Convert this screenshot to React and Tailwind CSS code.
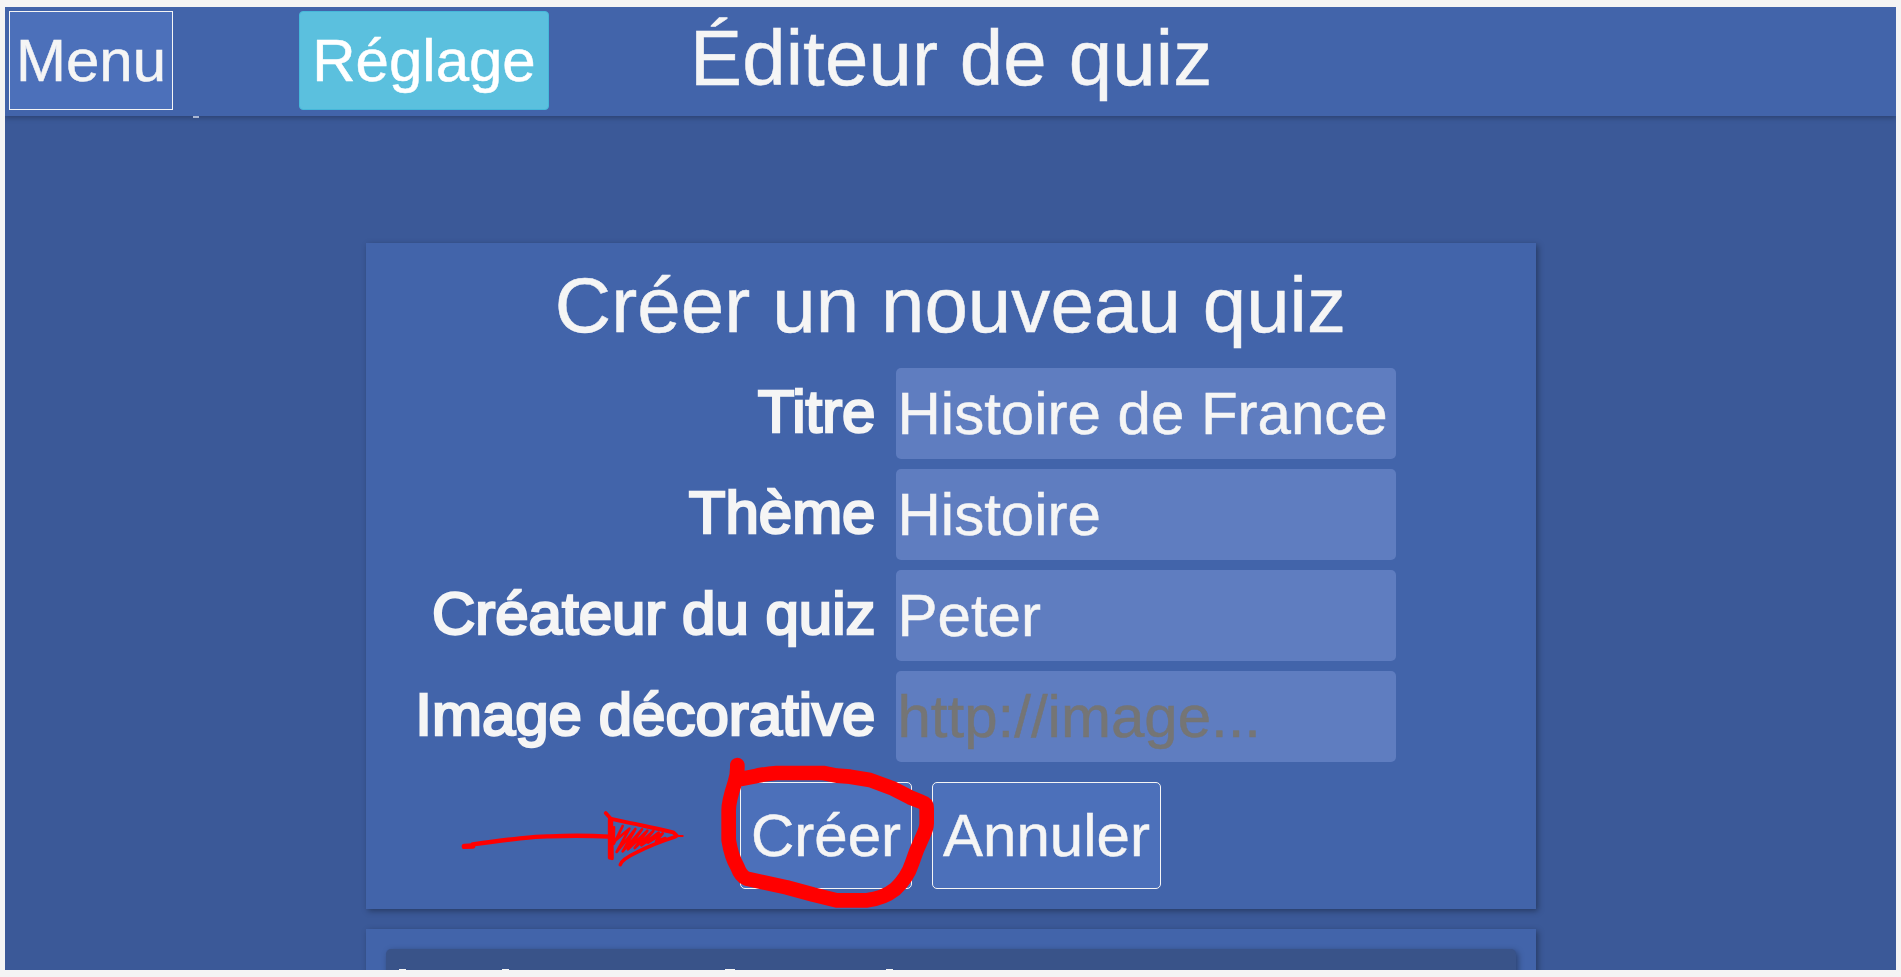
const fields = [
  { label: 'Titre', value: 'Histoire de France' },
  { label: 'Thème', value: 'Histoire' },
  { label: 'Créateur du quiz', value: 'Peter' },
  { label: 'Image décorative', value: '', placeholder: 'http://image...' },
];

function Header() {
  return (
    <header className="relative z-10 flex h-[109px] shrink-0 items-start bg-[#4264aa] pt-1 pl-1 shadow-[0_2px_5px_rgba(0,0,0,0.26)]">
      <button className="h-[99px] w-[164px] border border-[#f5f5f5] bg-[#4c70ba] text-[60px] leading-[97px]">Menu</button>
      <button className="ml-[126px] h-[99px] w-[250px] rounded-[4px] border border-[#46b8da] bg-[#5bc0de] text-[60px] leading-[97px] text-white">
        Réglage
      </button>
      <h1 className="ml-[141px] text-[78px] leading-[94px] tracking-[0.13px] whitespace-nowrap">Éditeur de quiz</h1>
      <span className="absolute top-full left-[188px] h-[2px] w-[6px] bg-[#a9b5d0]" />
    </header>
  );
}

function Field({ label, value, placeholder }) {
  return (
    <div className="flex h-[91px] items-center gap-5">
      <label className="w-[510px] pb-1 text-right text-[60px] leading-[87px] whitespace-nowrap [-webkit-text-stroke:2.5px_#f5f5f5]">
        {label}
      </label>
      <input
        className="h-[91px] w-[500px] rounded-[5px] bg-[#5f7dc0] px-[2px] text-[60px] text-[#f5f5f5] outline-none placeholder:text-[#757575]"
        defaultValue={value}
        placeholder={placeholder}
      />
    </div>
  );
}

function CreateCard() {
  return (
    <section className="flex h-[666px] w-[1170px] shrink-0 flex-col bg-[#4264aa] shadow-[2px_2px_6px_rgba(0,0,0,0.35)]">
      <h2 className="h-[125px] pt-[15px] text-center text-[78px] leading-[94px] tracking-[0.1px] whitespace-nowrap">Créer un nouveau quiz</h2>
      <form className="flex flex-col gap-[10px]">
        {fields.map((f) => (
          <Field key={f.label} {...f} />
        ))}
      </form>
      <div className="mt-5 flex justify-center gap-5">
        <button className="h-[107px] w-[172px] rounded-[5px] border border-[#f5f5f5] bg-[#4c70ba] text-[60px] leading-[105px]">Créer</button>
        <button className="h-[107px] w-[229px] rounded-[5px] border border-[#f5f5f5] bg-[#4c70ba] text-[60px] leading-[105px]">Annuler</button>
      </div>
    </section>
  );
}

function ListCard() {
  return (
    <section className="h-[200px] w-[1170px] shrink-0 bg-[#4264aa] px-5 pt-5 shadow-[2px_2px_6px_rgba(0,0,0,0.35)]">
      <div className="flex h-[180px] rounded-[5px] bg-[#395389] pt-5 pl-[13px] shadow-[2px_2px_6px_rgba(0,0,0,0.35)]">
        <span className="h-px w-[7px] bg-[#f5f5f5]" />
        <span className="ml-[96px] h-px w-[7px] bg-[#f5f5f5]" />
        <span className="ml-[216px] h-px w-[10px] bg-[#f5f5f5]" />
        <span className="ml-[151px] h-px w-[7px] bg-[#f5f5f5]" />
      </div>
    </section>
  );
}

function Annotations() {
  return (
    <>
      <svg className="absolute top-[740px] left-[440px] z-20" width="300" height="180" viewBox="0 0 900 540" fill="none" stroke="#ff0000" strokeLinecap="round" strokeLinejoin="round">
        <path d="M73 319L98 318" strokeWidth="16" />
        <path d="M98 313Q180 302 240 295T330 289Q420 285 508 290" strokeWidth="13" />
        <path d="M497 219L514 238L516 355" strokeWidth="11" />
        <path d="M510 236Q570 249 610 257T700 277L710 287" strokeWidth="12" />
        <path d="M708 288L728 288" strokeWidth="6" />
        <path d="M706 290Q640 311 590 337Q545 358 541 374" strokeWidth="11" />
        <path d="M511 240V352" strokeWidth="15" />
        <path d="M522 262L521 312L548 258L528 300L568 266L530 336L586 267L548 334L606 268L564 328L622 272L584 324L640 273L604 316L656 278L624 308L668 280L648 304L676 294" strokeWidth="8" />
      </svg>
      <svg className="absolute top-[740px] left-[700px] z-20" width="260" height="190" viewBox="0 0 780 570" fill="none" stroke="#ff0000" strokeWidth="44" strokeLinecap="round" strokeLinejoin="round">
        <path d="M112 75Q113 105 104 130Q86 185 86 210V300Q94 350 112 380Q122 408 140 416L260 442L340 464L410 481H500Q550 476 585 448Q622 414 636 370Q648 332 668 290Q680 265 680 250V205Q680 190 665 186L630 172L580 146L510 120L450 110L410 107L370 99H230Q180 104 165 109L122 117" />
      </svg>
    </>
  );
}

export default function App() {
  return (
    <div className="relative h-[977px] w-[1901px] overflow-hidden bg-[#f4f4f4] px-[5px] pt-[7px] font-['Liberation_Sans',Arial,sans-serif] text-[#f5f5f5] [-webkit-text-stroke-width:0.5px]">
      <div className="flex h-[963px] flex-col overflow-hidden bg-[#3b5998]">
        <Header />
        <main className="flex flex-col items-center gap-5 pt-[127px]">
          <CreateCard />
          <ListCard />
        </main>
      </div>
      <Annotations />
    </div>
  );
}
